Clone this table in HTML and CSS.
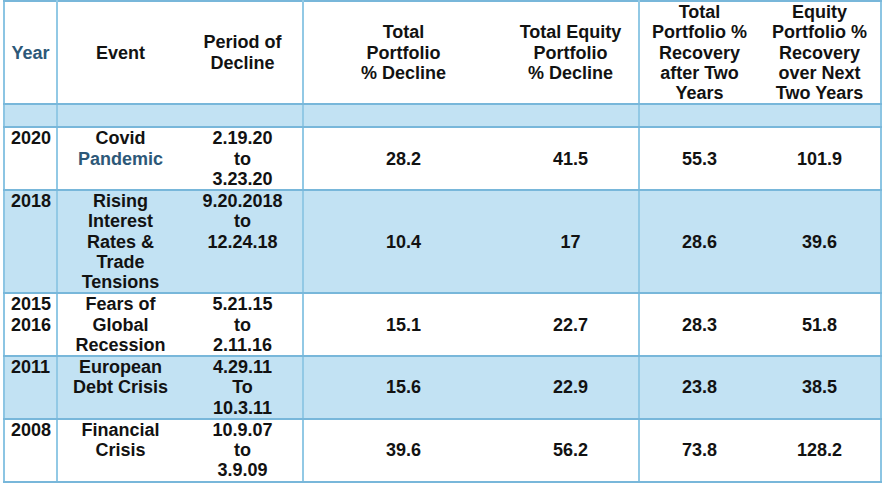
FILE: index.html
```html
<!DOCTYPE html>
<html lang="en">
<head>
<meta charset="utf-8">
<title>Market Declines and Recoveries</title>
<link rel="stylesheet" href="styles.css">
</head>
<body>
<div class="page">
<table class="decline-table">
  <colgroup>
    <col class="c-year">
    <col class="c-event">
    <col class="c-period">
    <col class="c-tpd">
    <col class="c-ted">
    <col class="c-tpr">
    <col class="c-epr">
  </colgroup>
  <thead>
    <tr class="head-row">
      <th class="year-h sep">Year</th>
      <th>Event</th>
      <th class="sep">Period of<br>Decline</th>
      <th>Total<br>Portfolio<br>% Decline</th>
      <th class="sep">Total Equity<br>Portfolio<br>% Decline</th>
      <th>Total<br>Portfolio %<br>Recovery<br>after Two<br>Years</th>
      <th>Equity<br>Portfolio %<br>Recovery<br>over Next<br>Two Years</th>
    </tr>
  </thead>
  <tbody>
    <tr class="band">
      <td class="sep"></td><td></td><td class="sep"></td><td></td><td class="sep"></td><td></td><td></td>
    </tr>
    <tr class="r3">
      <td class="year sep">2020</td>
      <td class="txt">Covid<br><span class="accent">Pandemic</span></td>
      <td class="txt sep">2.19.20<br>to<br>3.23.20</td>
      <td class="num">28.2</td>
      <td class="num sep">41.5</td>
      <td class="num">55.3</td>
      <td class="num">101.9</td>
    </tr>
    <tr class="r5 shaded">
      <td class="year sep">2018</td>
      <td class="txt">Rising<br>Interest<br>Rates &amp;<br>Trade<br>Tensions</td>
      <td class="txt sep">9.20.2018<br>to<br>12.24.18</td>
      <td class="num">10.4</td>
      <td class="num sep">17</td>
      <td class="num">28.6</td>
      <td class="num">39.6</td>
    </tr>
    <tr class="r3">
      <td class="year sep">2015<br>2016</td>
      <td class="txt">Fears of<br>Global<br>Recession</td>
      <td class="txt sep">5.21.15<br>to<br>2.11.16</td>
      <td class="num">15.1</td>
      <td class="num sep">22.7</td>
      <td class="num">28.3</td>
      <td class="num">51.8</td>
    </tr>
    <tr class="r3 shaded">
      <td class="year sep">2011</td>
      <td class="txt">European<br>Debt Crisis</td>
      <td class="txt sep">4.29.11<br>To<br>10.3.11</td>
      <td class="num">15.6</td>
      <td class="num sep">22.9</td>
      <td class="num">23.8</td>
      <td class="num">38.5</td>
    </tr>
    <tr class="r3">
      <td class="year sep">2008</td>
      <td class="txt">Financial<br>Crisis</td>
      <td class="txt sep">10.9.07<br>to<br>3.9.09</td>
      <td class="num">39.6</td>
      <td class="num sep">56.2</td>
      <td class="num">73.8</td>
      <td class="num">128.2</td>
    </tr>
  </tbody>
</table>
</div>
</body>
</html>
```

FILE: styles.css
```css
html, body {
  margin: 0;
  padding: 0;
  background: #ffffff;
}

.page {
  padding: 0 0 0 3px;
}

.decline-table {
  border-collapse: collapse;
  table-layout: fixed;
  width: 877px;
  font-family: "Liberation Sans", Arial, sans-serif;
  font-weight: bold;
  font-size: 18px;
  line-height: 20.25px;
  color: #121212;
  border: 2px solid #8cc5e3;
}

.c-year { width: 53px; }
.c-event { width: 126px; }
.c-period { width: 120px; }
.c-tpd { width: 200px; }
.c-ted { width: 136px; }
.c-tpr { width: 120px; }
.c-epr { width: 122px; }

.decline-table th,
.decline-table td {
  padding: 0;
  text-align: center;
  border-top: 2px solid #78b7da;
  border-bottom: 2px solid #78b7da;
  border-left: none;
  border-right: none;
}

.decline-table th.sep,
.decline-table td.sep {
  border-right: 2px solid #92c9e5;
}

.decline-table th {
  vertical-align: middle;
  font-weight: bold;
  height: 101px;
}

.decline-table th.year-h {
  color: #2d5878;
}

.band td {
  background: #c2e2f3;
  height: 21px;
}

.shaded td {
  background: #c2e2f3;
}

.r3 td {
  height: 60px;
}

.decline-table td.year {
  text-align: left;
  padding-left: 6px;
  vertical-align: top;
}

.decline-table td.txt {
  vertical-align: top;
}

.decline-table td.num {
  vertical-align: middle;
}

.accent {
  color: #2d5878;
}
```
